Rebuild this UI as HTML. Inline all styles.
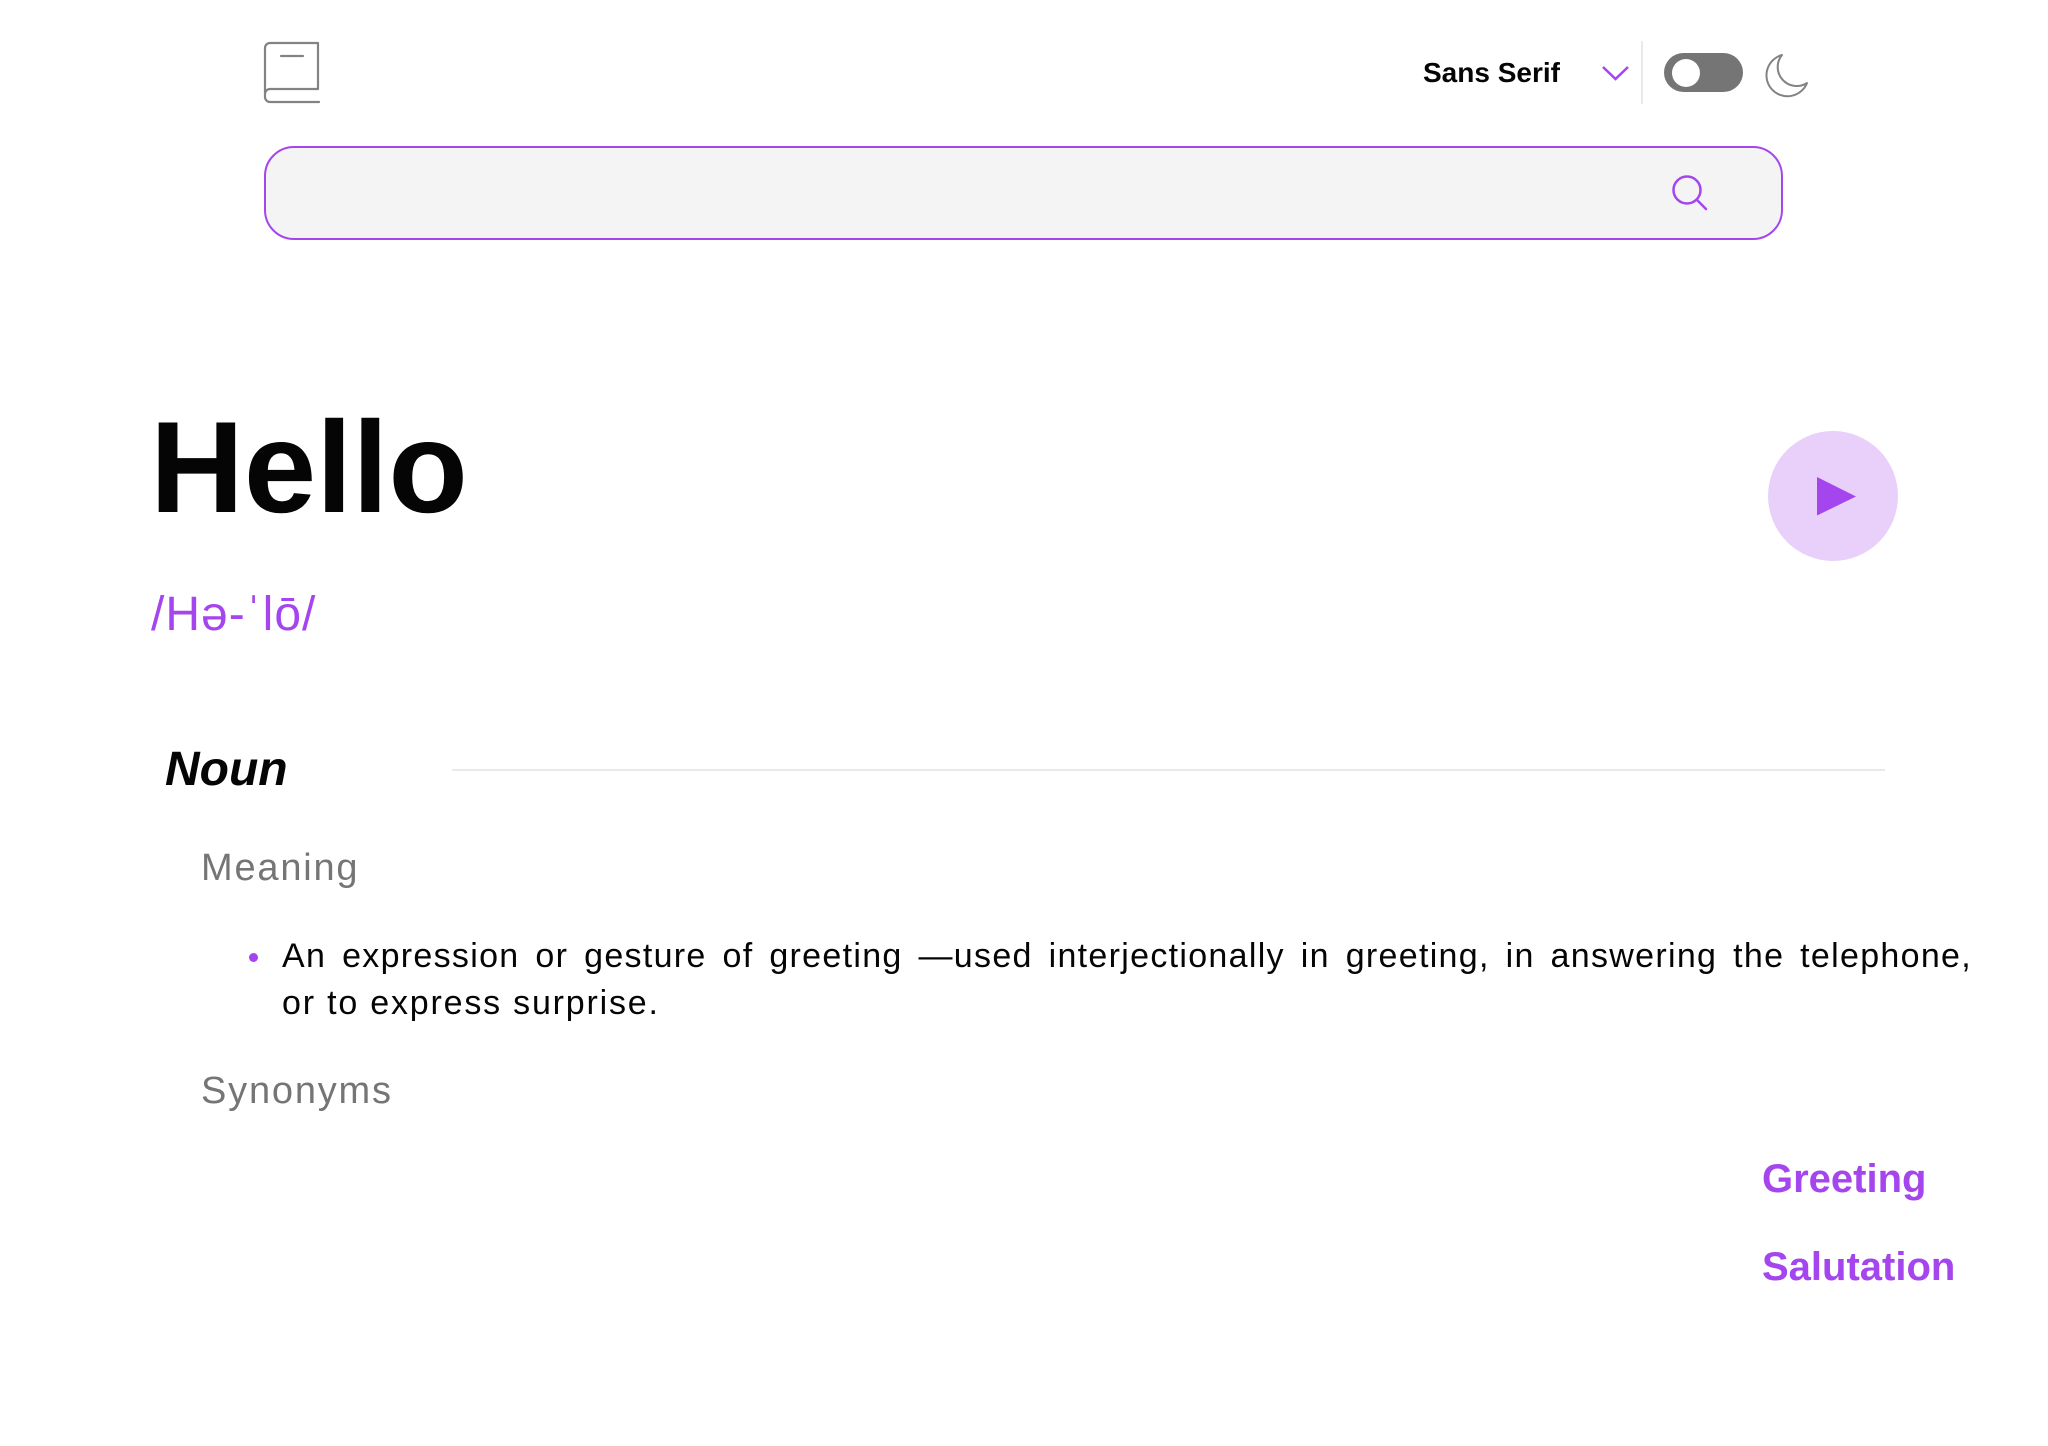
<!DOCTYPE html>
<html><head><meta charset="utf-8"><style>
html,body{margin:0;padding:0;background:#fff;width:2048px;height:1446px;overflow:hidden;position:relative;font-family:"Liberation Sans",Arial,sans-serif}
.a{position:absolute;white-space:nowrap;line-height:1}
</style></head><body>
<svg class="a" style="left:260px;top:38px" width="66" height="70" viewBox="260 38 66 70">
<path d="M318 43 H270 a5 5 0 0 0 -5 5 V97 a5 5 0 0 0 5 5 H319 M318 43 V89 H270 a5 5 0 0 0 -5 5 M281 56 H303" fill="none" stroke="#838383" stroke-width="2.2" stroke-linecap="round" stroke-linejoin="round"/>
</svg>
<div class="a" style="left:1423px;top:59px;font-size:28px;font-weight:bold;color:#050505">Sans Serif</div>
<svg class="a" style="left:1598px;top:62px" width="36" height="24"><path d="M5 5 L17.5 17 L30 5" fill="none" stroke="#a445ed" stroke-width="2.5"/></svg>
<div class="a" style="left:1641px;top:41px;width:2px;height:63px;background:#e9e9e9"></div>
<div class="a" style="left:1664px;top:53px;width:79px;height:39px;border-radius:20px;background:#757575"></div>
<div class="a" style="left:1672px;top:59px;width:28px;height:28px;border-radius:50%;background:#fff"></div>
<svg class="a" style="left:1755px;top:45px" width="65" height="60" viewBox="1755 45 65 60"><path d="M1782 55 A21 21 0 1 0 1807 83 A19 19 0 0 1 1782 55 Z" fill="none" stroke="#838383" stroke-width="2" stroke-linejoin="round"/></svg>
<div class="a" style="left:264px;top:146px;width:1515px;height:90px;border:2px solid #a445ed;border-radius:30px;background:#f4f4f4"></div>
<svg class="a" style="left:1665px;top:170px" width="50" height="50"><circle cx="22" cy="20" r="13.5" fill="none" stroke="#a445ed" stroke-width="2.5"/><path d="M32 30 L41 39" stroke="#a445ed" stroke-width="2.5" stroke-linecap="round"/></svg>
<div class="a" style="left:150px;top:402px;font-size:130px;font-weight:bold;color:#050505">Hello</div>
<div class="a" style="left:1768px;top:431px;width:130px;height:130px;border-radius:50%;background:#e9d0fa"></div>
<svg class="a" style="left:1817px;top:477px" width="40" height="39"><path d="M0 0 L39 19.5 L0 38.5 Z" fill="#a445ed"/></svg>
<div class="a" style="left:151px;top:591px;font-size:48px;color:#a445ed;letter-spacing:1px">/Hə-ˈlō/</div>
<div class="a" style="left:165px;top:746px;font-size:48px;font-weight:bold;font-style:italic;color:#050505">Noun</div>
<div class="a" style="left:452px;top:769px;width:1433px;height:2px;background:#e9e9e9"></div>
<div class="a" style="left:201px;top:849px;font-size:38px;color:#757575;letter-spacing:1.8px">Meaning</div>
<div class="a" style="left:249px;top:953px;width:9px;height:9px;border-radius:50%;background:#a445ed"></div>
<div class="a" style="left:282px;top:939px;font-size:34px;color:#050505;letter-spacing:1.3px;width:1690px;text-align:justify;text-align-last:justify">An expression or gesture of greeting —used interjectionally in greeting, in answering the telephone,</div>
<div class="a" style="left:282px;top:986px;font-size:34px;color:#050505;letter-spacing:1.8px">or to express surprise.</div>
<div class="a" style="left:201px;top:1072px;font-size:38px;color:#757575;letter-spacing:1.8px">Synonyms</div>
<div class="a" style="left:1762px;top:1159px;font-size:40px;font-weight:bold;color:#a445ed">Greeting</div>
<div class="a" style="left:1762px;top:1247px;font-size:40px;font-weight:bold;color:#a445ed">Salutation</div>
</body></html>
